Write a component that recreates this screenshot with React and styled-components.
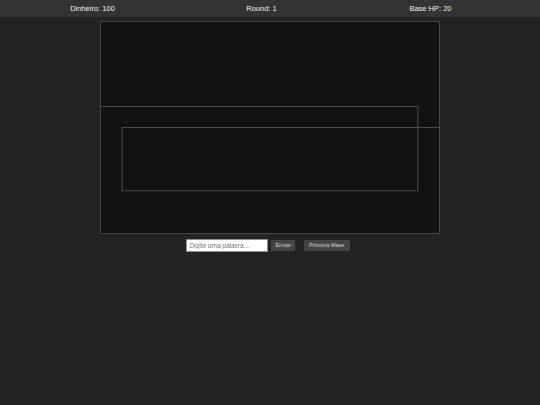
import React, { useState } from 'react';
import styled, { createGlobalStyle } from 'styled-components';

const GlobalStyle = createGlobalStyle`
  html, body {
    margin: 0;
    padding: 0;
    background: #232323;
    font-family: "Liberation Sans", Arial, sans-serif;
  }
`;

// route the enemies walk, in board units (800 x 500)
const PATH = [
  [0, 200],
  [750, 200],
  [750, 400],
  [50, 400],
  [50, 250],
  [800, 250],
];

const Game = () => {
  const [stats] = useState({ money: 100, round: 1, hp: 20 });
  const [word, setWord] = useState('');

  return (
    <>
      <GlobalStyle />
      <Page>
        <StatusBar>
          <Stat>Dinheiro: {stats.money}</Stat>
          <Stat>Round: {stats.round}</Stat>
          <Stat>Base HP: {stats.hp}</Stat>
        </StatusBar>
        <Board>
          <svg viewBox="0 0 800 500" width="100%" height="100%" preserveAspectRatio="none">
            <polyline
              points={PATH.map(p => p.join(',')).join(' ')}
              fill="none"
              stroke="#4a4a4a"
              strokeWidth="2.4"
            />
          </svg>
        </Board>
        <Controls>
          <WordInput
            placeholder="Digite uma palavra..."
            value={word}
            onChange={e => setWord(e.target.value)}
          />
          <Button>Enviar</Button>
          <Button $wide>Próxima Wave</Button>
        </Controls>
      </Page>
    </>
  );
};

const Page = styled.div`
  display: flex;
  flex-direction: column;
  align-items: center;
  min-height: 405px;
  background: #232323;
`

const StatusBar = styled.div`
  display: flex;
  align-self: stretch;
  height: 17px;
  padding: 0 25px 0 8px;
  background: #333333;
  align-items: center;
`

const Stat = styled.span`
  flex: 1;
  text-align: center;
  color: #f2f2f2;
  font-size: 7.5px;
`

const Board = styled.div`
  display: flex;
  margin-top: 4px;
  width: 340px;
  height: 213px;
  box-sizing: border-box;
  border: 1px solid #454545;
  background: #121212;
  overflow: hidden;
`

const Controls = styled.div`
  display: flex;
  align-items: center;
  margin-top: 5px;
  padding-right: 4px;
`

const WordInput = styled.input`
  width: 82px;
  height: 13px;
  box-sizing: border-box;
  padding: 0 2px;
  border: 1px solid #8f8f8f;
  border-radius: 0;
  background: #ffffff;
  font-family: "Liberation Sans", Arial, sans-serif;
  font-size: 6.5px;
  outline: none;

  &::placeholder {
    color: #777777;
  }
`

const Button = styled.button`
  height: 11px;
  margin-left: ${props => (props.$wide ? '9px' : '3px')};
  padding: 0 ${props => (props.$wide ? '5px' : '4px')};
  border: none;
  border-radius: 1px;
  background: #444444;
  color: #d6d6d6;
  font-family: "Liberation Sans", Arial, sans-serif;
  font-size: 5.5px;
  line-height: 11px;
  cursor: pointer;
`

export default Game;
